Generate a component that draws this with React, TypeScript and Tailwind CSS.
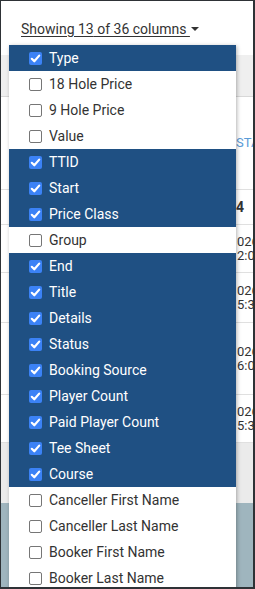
import React from 'react';

interface ColumnOption {
  label: string;
  visible: boolean;
}

const columns: ColumnOption[] = [
  { label: 'Type', visible: true },
  { label: '18 Hole Price', visible: false },
  { label: '9 Hole Price', visible: false },
  { label: 'Value', visible: false },
  { label: 'TTID', visible: true },
  { label: 'Start', visible: true },
  { label: 'Price Class', visible: true },
  { label: 'Group', visible: false },
  { label: 'End', visible: true },
  { label: 'Title', visible: true },
  { label: 'Details', visible: true },
  { label: 'Status', visible: true },
  { label: 'Booking Source', visible: true },
  { label: 'Player Count', visible: true },
  { label: 'Paid Player Count', visible: true },
  { label: 'Tee Sheet', visible: true },
  { label: 'Course', visible: true },
  { label: 'Canceller First Name', visible: false },
  { label: 'Canceller Last Name', visible: false },
  { label: 'Booker First Name', visible: false },
  { label: 'Booker Last Name', visible: false },
];

const dateRows = [
  { time: '12:00', height: 'h-[48px]' },
  { time: '15:30', height: 'h-[50px]' },
  { time: '16:00', height: 'h-[72px]' },
  { time: '15:30', height: 'h-[48px]' },
];

const Checkbox: React.FC<{ checked: boolean }> = ({ checked }) =>
  checked ? (
    <span className="flex h-[13px] w-[13px] shrink-0 items-center justify-center rounded-[2px] bg-[#3b82f6]">
      <svg viewBox="0 0 13 13" className="h-[13px] w-[13px]">
        <path d="M2.8 6.8 L5.3 9.3 L10.2 3.6" fill="none" stroke="#fff" strokeWidth="2.2" strokeLinecap="round" strokeLinejoin="round" />
      </svg>
    </span>
  ) : (
    <span className="h-[13px] w-[13px] shrink-0 rounded-[2px] border border-[#767676] bg-white" />
  );

export default function App() {
  const shown = columns.filter((c) => c.visible).length;

  return (
    <div className="relative h-[589px] w-[255px] overflow-hidden border-t border-l border-r-2 border-b-2 border-[#2e3236] bg-white font-['Roboto',sans-serif]">
      {/* Page behind the menu */}
      <div className="flex h-[54px] items-start pt-[18px] pl-[20px] text-[14px] text-[#333]">
        <span className="underline underline-offset-2">Showing {shown} of 36 columns&nbsp;</span>
        <span className="mt-[8px] ml-[1px] h-0 w-0 border-x-[4px] border-t-[4px] border-x-transparent border-t-[#333]" />
      </div>
      <div className="h-[42px] border-b border-[#d8d8d8] bg-[#efefef]" />
      <div className="flex h-[93px] items-center border-b border-[#e0e0e0] pl-[235px] text-[13px] text-[#5a9bd8]">
        STA
      </div>
      <div className="flex h-[35px] items-center border-b border-[#e0e0e0] pl-[235px] text-[14px] font-bold text-[#333]">
        4
      </div>
      {dateRows.map((row, i) => (
        <div
          key={i}
          className={`flex ${row.height} flex-col justify-center border-b border-[#e0e0e0] pl-[236px] text-[13px] leading-[13px] text-[#333]`}
        >
          <span>026</span>
          <span className="mt-[1px]">{row.time.slice(1)}</span>
        </div>
      ))}
      <div className="h-[60px] bg-[#ebebeb]" />
      <div className="h-[90px] bg-[#9fb5be]" />

      {/* Column picker menu */}
      <div className="absolute top-[44px] left-[8px] w-[227px] bg-white shadow-[1px_1px_4px_rgba(0,0,0,0.3)]">
        {columns.map((col) => (
          <div
            key={col.label}
            className={`flex h-[26px] items-center pl-[20px] text-[14px] ${
              col.visible ? 'bg-[#1f5083] text-white' : 'bg-white text-[#333]'
            }`}
          >
            <Checkbox checked={col.visible} />
            <span className="ml-[7px]">{col.label}</span>
          </div>
        ))}
      </div>
    </div>
  );
}
